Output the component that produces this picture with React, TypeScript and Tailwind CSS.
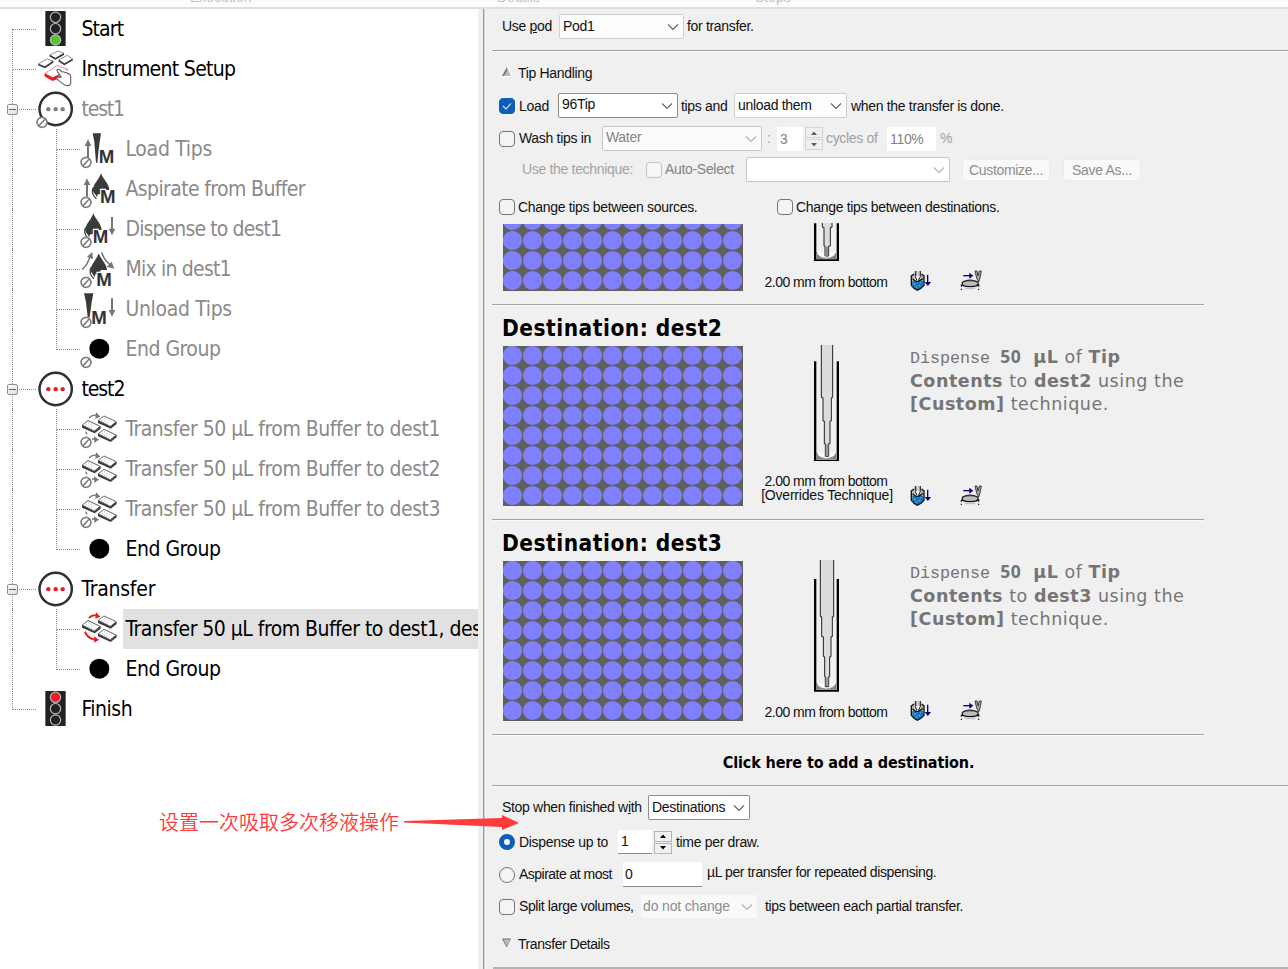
import React from "react";

const UI = "font-['Liberation_Sans',sans-serif] text-[14px]";
const TAHOMA = "font-['DejaVu_Sans_Condensed','DejaVu_Sans',sans-serif]";

/* ---------- tree icons: drawn in a 120-unit box, shown at 40px ---------- */

function Glyph({ children, off = false }: { children: React.ReactNode; off?: boolean }) {
  return (
    <svg viewBox="0 0 120 120" className="block size-10 shrink-0 overflow-visible">
      {children}
      {off && (
        <g fill="#fff" stroke="#808080" strokeWidth="5">
          <circle cx="18" cy="100" r="15" />
          <path d="M9 110 28 90" />
        </g>
      )}
    </svg>
  );
}

function TrafficLight({ on }: { on: "green" | "red" }) {
  return (
    <Glyph>
      <rect x="28" y="6" width="61" height="105" rx="2" fill="#222" />
      <g stroke="#b9b9b9" strokeWidth="3.5" fill="#222">
        <circle cx="58.500" cy="25" r="15.500" fill={on === "red" ? "#ee1c25" : "#222"} />
        <circle cx="58.500" cy="59" r="15.500" />
        <circle cx="58.500" cy="93" r="15.500" fill={on === "green" ? "#55c52d" : "#222"} />
      </g>
    </Glyph>
  );
}

function SetupIcon() {
  return (
    <Glyph>
      <g fill="#fff" stroke="#777" strokeWidth="2.5" strokeLinejoin="round">
        <path d="M7 45 32 30 52 36 27 53Z" />
        <path d="M41 18 67 6 84 13 58 28Z" />
        <path d="M68 33 94 19 110 30 85 44Z" />
      </g>
      <g fill="none" stroke="#333" strokeWidth="4.5">
        <path d="M7 47 27 55 52 38" />
        <path d="M41 20 58 30 84 15" />
        <path d="M68 35 85 46 110 32" />
      </g>
      <path d="M26 74 64 49 96 62 M88 58 95 62 92 67" fill="none" stroke="#f55" strokeWidth="3" strokeDasharray="5 2" />
      <path d="M26 76 50 89 70 80 M27 79 50 92 66 86" fill="none" stroke="#ed1c24" strokeWidth="7" />
      <path
        d="M67 61Q61 61 64 67L76 85 67 84Q60 85 64 91L80 104Q88 111 99 110L104 104V82Q102 73 95 74 92 69 87 71 83 67 79 69L72 63Q69 61 67 61Z"
        fill="#fff"
        stroke="#666"
        strokeWidth="3.500"
        strokeLinejoin="round"
      />
    </Glyph>
  );
}

function GroupIcon({ off = false }: { off?: boolean }) {
  return (
    <Glyph off={off}>
      <circle cx="59" cy="60" r="48.500" fill="#fff" stroke="#303030" strokeWidth="7.500" />
      <g fill={off ? "#808080" : "#ed1c24"}>
        <circle cx="37" cy="60.500" r="6.500" />
        <circle cx="59" cy="60.500" r="6.500" />
        <circle cx="80" cy="60.500" r="6.500" />
      </g>
    </Glyph>
  );
}

function EndIcon({ off = false }: { off?: boolean }) {
  return (
    <Glyph off={off}>
      <circle cx="58" cy="59" r="30" fill="#000" />
    </Glyph>
  );
}

function Em({ x, y = 103 }: { x: number; y?: number }) {
  return (
    <text
      x={x}
      y={y}
      className="font-['Liberation_Sans',sans-serif] text-[56px] font-bold tracking-normal"
      fill="#333"
      stroke="#fff"
      strokeWidth="7"
      paintOrder="stroke"
    >
      M
    </text>
  );
}

const UP = "M0 0 10 20H3V55H-3V20H-10Z";

function LoadIcon() {
  return (
    <Glyph off>
      <path d="M38 13H63L59 38 52 101H48L43 38Z" fill="#3a3a3a" />
      <Em x={56} />
      <path d={UP} transform="translate(24 31)" fill="#757575" />
    </Glyph>
  );
}

function DropShape({ x }: { x: number }) {
  return (
    <g transform={`translate(${x} 13)`}>
      <path d="M0 0C6 18 25 32 25 50H7L-2 63H-10L-12 72-18 62Q-28 52-22 40C-18 28-5 16 0 0Z" fill="#3a3a3a" />
      <path d="M-23 42Q-32 60-14 76" fill="none" stroke="#444" strokeWidth="4" />
    </g>
  );
}

function AspirateIcon() {
  return (
    <Glyph off>
      <DropShape x={63} />
      <Em x={60} />
      <path d={UP} transform="translate(21 28)" fill="#757575" />
    </Glyph>
  );
}

function DispenseIcon() {
  return (
    <Glyph off>
      <DropShape x={40} />
      <Em x={38} />
      <path d={UP} transform="translate(96 79) rotate(180)" fill="#757575" />
    </Glyph>
  );
}

function MixIcon() {
  return (
    <Glyph off>
      <DropShape x={56} />
      <Em x={49} y={112} />
      <g fill="none" stroke="#757575" strokeWidth="4.500">
        <path d="M6 61Q22 50 30 22M65 10Q72 34 92 48" />
      </g>
      <path d="M37 9 39 31 21 23ZM103 59 80 53 95 38Z" fill="#757575" />
    </Glyph>
  );
}

function UnloadIcon() {
  return (
    <Glyph off>
      <path d="M12 13H40L35 40 29 84H23L18 40Z" fill="#3a3a3a" />
      <Em x={34} y={104} />
      <path d={UP} transform="translate(96 83) rotate(180)" fill="#757575" />
    </Glyph>
  );
}

function Plate({ x, y }: { x: number; y: number }) {
  return (
    <g transform={`translate(${x} ${y})`}>
      <path d="M0 15 18 0 56 18 56 25 38 39 0 22Z" fill="#3c3c3c" />
      <path d="M1 14 18 1 54 18 37 32Z" fill="#fff" stroke="#666" strokeWidth="2.500" />
      <path d="M12 13 34 24M19 8 41 19" stroke="#999" strokeWidth="2.500" strokeDasharray="3 5" />
    </g>
  );
}

function TransferIcon({ off = false }: { off?: boolean }) {
  const c = off ? "#777" : "#ed1c24";
  return (
    <Glyph off={off}>
      <Plate x={6} y={34} />
      <Plate x={54} y={20} />
      <Plate x={54} y={60} />
      <path d="M27 27Q38 15 52 20" fill="none" stroke={c} strokeWidth={off ? 4 : 6} />
      <path d="M48 10 61 23 46 29Z" fill={c} />
      <path d={off ? "M17 68 21 76M36 90H46" : "M15 68Q22 88 44 92"} fill="none" stroke={c} strokeWidth={off ? 4 : 6} />
      <path d="M42 82 57 92 43 101Z" fill={c} />
    </Glyph>
  );
}

/* ------------------------------- tree ------------------------------- */

type Node = {
  label: string;
  icon: React.ReactNode;
  spacing: string;
  level?: 1;
  open?: boolean;
  dim?: boolean;
  first?: boolean;
  last?: boolean;
  selected?: boolean;
};

const nodes: Node[] = [
  { label: "Start", icon: <TrafficLight on="green" />, first: true, spacing: "tracking-[-0.900px]" },
  { label: "Instrument Setup", icon: <SetupIcon />, spacing: "tracking-[-0.690px]" },
  { label: "test1", icon: <GroupIcon off />, open: true, dim: true, spacing: "tracking-[-1.200px]" },
  { label: "Load Tips", icon: <LoadIcon />, level: 1, dim: true, spacing: "tracking-[-0.300px]" },
  { label: "Aspirate from Buffer", icon: <AspirateIcon />, level: 1, dim: true, spacing: "tracking-[-0.620px]" },
  { label: "Dispense to dest1", icon: <DispenseIcon />, level: 1, dim: true, spacing: "tracking-[-0.880px]" },
  { label: "Mix in dest1", icon: <MixIcon />, level: 1, dim: true, spacing: "tracking-[-0.800px]" },
  { label: "Unload Tips", icon: <UnloadIcon />, level: 1, dim: true, spacing: "tracking-[-0.350px]" },
  { label: "End Group", icon: <EndIcon off />, level: 1, dim: true, last: true, spacing: "tracking-[-0.500px]" },
  { label: "test2", icon: <GroupIcon />, open: true, spacing: "tracking-[-1.100px]" },
  { label: "Transfer 50 µL from Buffer to dest1", icon: <TransferIcon off />, level: 1, dim: true, spacing: "tracking-[-0.490px]" },
  { label: "Transfer 50 µL from Buffer to dest2", icon: <TransferIcon off />, level: 1, dim: true, spacing: "tracking-[-0.490px]" },
  { label: "Transfer 50 µL from Buffer to dest3", icon: <TransferIcon off />, level: 1, dim: true, spacing: "tracking-[-0.490px]" },
  { label: "End Group", icon: <EndIcon />, level: 1, last: true, spacing: "tracking-[-0.500px]" },
  { label: "Transfer", icon: <GroupIcon />, open: true, spacing: "tracking-[-0.250px]" },
  {
    label: "Transfer 50 µL from Buffer to dest1, dest2, dest3",
    icon: <TransferIcon />,
    level: 1,
    selected: true,
    spacing: "tracking-[-0.530px]",
  },
  { label: "End Group", icon: <EndIcon />, level: 1, last: true, spacing: "tracking-[-0.500px]" },
  { label: "Finish", icon: <TrafficLight on="red" />, last: true, spacing: "tracking-[-0.500px]" },
];

function Guide({ first, last }: { first?: boolean; last?: boolean }) {
  return (
    <div className="flex w-6 shrink-0 flex-col">
      <div className={`h-[21px] border-b border-dotted border-[#8c8c8c] ${first ? "" : "border-l"}`} />
      <div className={`h-[19px] border-dotted border-[#8c8c8c] ${last ? "" : "border-l"}`} />
    </div>
  );
}

function TreeRow({ n }: { n: Node }) {
  return (
    <div className="relative flex h-10 shrink-0 pl-3">
      {n.level ? (
        <>
          <div className="w-11 shrink-0 border-l border-dotted border-[#8c8c8c]" />
          <Guide last={n.last} />
        </>
      ) : (
        <Guide first={n.first} last={n.last} />
      )}
      {n.open && (
        <span className="absolute left-[7px] top-[15px] flex size-[11px] items-center justify-center rounded-[2px] border border-[#919191] bg-linear-to-br from-white to-[#dcdcdc]">
          <span className="h-px w-[7px] bg-[#4b63a7]" />
        </span>
      )}
      {n.icon}
      <div
        className={`ml-[3px] flex grow items-center overflow-hidden pl-[2.500px] whitespace-nowrap ${n.spacing} ${
          n.dim ? "text-[#8a8a8a]" : "text-black"
        } ${n.selected ? "bg-[#e1e1e1]" : ""}`}
      >
        {n.label}
      </div>
    </div>
  );
}

/* ----------------------------- controls ----------------------------- */

function Chevron({ dim }: { dim?: boolean }) {
  return (
    <svg viewBox="0 0 12 8" className="h-2 w-3 shrink-0">
      <path d="M1 1.500 6 6.500 11 1.500" fill="none" stroke={dim ? "#b4b4b4" : "#666"} strokeWidth="1.200" />
    </svg>
  );
}

function Combo({ className, value, dim, raised }: { className: string; value?: string; dim?: boolean; raised?: boolean }) {
  return (
    <div className={`flex h-[25px] shrink-0 items-center justify-between rounded-[2px] border pr-1 pl-[3px] whitespace-nowrap ${className}`}>
      <span className={raised ? "pb-[2px]" : ""}>{value}</span>
      <Chevron dim={dim} />
    </div>
  );
}

function Check({ on, dim, className = "" }: { on?: boolean; dim?: boolean; className?: string }) {
  return (
    <span
      className={`flex size-4 shrink-0 items-center justify-center rounded-[4px] border ${
        on ? "border-[#0a5fb8] bg-[#0a5fb8]" : dim ? "border-[#c2c2c2] bg-[#f6f6f6]" : "border-[#757575] bg-[#f4f4f4]"
      } ${className}`}
    >
      {on && (
        <svg viewBox="0 0 12 12" className="size-3">
          <path d="M2 6 5 9 10 3.500" fill="none" stroke="#e6f0fa" strokeWidth="1.100" />
        </svg>
      )}
    </span>
  );
}

function Radio({ on }: { on?: boolean }) {
  return (
    <span
      className={`size-4 shrink-0 rounded-full ${on ? "border-[5px] border-[#0a5fb8] bg-white" : "border border-[#757575] bg-[#f4f4f4]"}`}
    />
  );
}

function Spinner({ dim, className }: { dim?: boolean; className: string }) {
  const box = `flex h-[11px] w-[18px] items-center justify-center border ${dim ? "border-[#d4d4d4]" : "border-[#b4b4b4]"} bg-[#f0f0f0]`;
  const c = dim ? "#606060" : "#000";
  return (
    <div className={`flex shrink-0 flex-col gap-px ${className}`}>
      <span className={box}>
        <svg viewBox="0 0 6 4" className="h-1 w-1.5">
          <path d="M0 4 3 .5 6 4Z" fill={c} />
        </svg>
      </span>
      <span className={box}>
        <svg viewBox="0 0 6 4" className="h-1 w-1.5">
          <path d="M0 0 3 3.500 6 0Z" fill={c} />
        </svg>
      </span>
    </div>
  );
}

function Rule({ full }: { full?: boolean }) {
  return <div className={`ml-[6px] h-[2px] shrink-0 border-t border-[#a2a2a2] bg-[#fafafa] ${full ? "" : "w-[712px]"}`} />;
}

/* ---------------------------- labware art ---------------------------- */

function Plate96({ rows, top = 0 }: { rows: number; top?: number }) {
  const h = rows * 20 - top;
  const wells = [];
  for (let r = 0; r < rows; r++) {
    for (let c = 0; c < 12; c++) {
      wells.push(<circle key={`${r}-${c}`} cx={9.500 + c * 20} cy={9.500 + r * 20} r="9.600" />);
    }
  }
  return (
    <svg width="240" height={h} viewBox={`0 ${top} 240 ${h}`} className="block shrink-0">
      <rect y={top} width="240" height={h} fill="#606060" />
      <g fill="#8080ff">{wells}</g>
    </svg>
  );
}

function Well({ bottom }: { bottom: number }) {
  const b = bottom;
  return (
    <>
      <path d={`M197 ${b - 25}Q201 ${b - 9} 226 ${b - 7}Q251 ${b - 9} 255 ${b - 25}V${b - 6}H197Z`} fill="#808080" />
      <path
        d={`M197 ${b - 26}Q201 ${b - 10} 226 ${b - 8}Q251 ${b - 10} 255 ${b - 26}`}
        fill="#fbfbfb"
        stroke="#444"
        strokeWidth="2"
        strokeDasharray="7 2"
      />
    </>
  );
}

function TubeShort() {
  return (
    <svg viewBox="186 39 81 114" className="block h-[38px] w-[27px] shrink-0">
      <Well bottom={153} />
      <path d="M189 40H196V148H257V40H264V153H189Z" fill="#000" />
      <path d="M214 32V52H219V108H222V138H233V108H238V52H243V32Z" fill="#dcdcdc" stroke="#222" strokeWidth="3" />
      <path d="M223 110H232V137H223Z" fill="#888" />
    </svg>
  );
}

function TubeMid() {
  return (
    <svg viewBox="186 14 81 349" className="block h-[116.300px] w-[27px] shrink-0">
      <Well bottom={363} />
      <path d="M189 63H196V358H257V63H264V363H189Z" fill="#000" />
      <path d="M211 10V172H216V242H220V310H223V348H233V310H237V242H241V172H245V10Z" fill="#dcdcdc" stroke="#222" strokeWidth="3" />
      <path d="M224 312H232V346H224Z" fill="#999" />
    </svg>
  );
}

function TubeLong() {
  return (
    <svg viewBox="186 58 81 395" className="block h-[131.700px] w-[27px] shrink-0">
      <Well bottom={453} />
      <path d="M189 115H196V448H257V115H264V453H189Z" fill="#000" />
      <path d="M208 54V228H212V288H217V348H221V408H223V438H233V408H236V348H240V288H244V228H248V54Z" fill="#dcdcdc" stroke="#222" strokeWidth="3" />
      <path d="M224 410H232V436H224Z" fill="#999" />
    </svg>
  );
}

function Actions() {
  return (
    <div className="flex gap-7">
      <svg viewBox="0 0 66 66" className="block size-[22px]">
        <path d="M4 18 13 10V54L4 45ZM42 18 33 10V54L42 45Z" fill="#b5b5b5" />
        <path d="M7 33 14 31 22 38 30 31 39 33V47L31 56 22 60 13 56 7 47Z" fill="#1476c0" />
        <path d="M12 42H17M26 47H31M17 51H21M31 38H34" stroke="#7cc6f0" strokeWidth="3" />
        <path d="M4 16V46L12 55 22 61 33 55 42 46V16M4 18 12 12M42 18 35 12M8 26 19 35 24 35 38 26" fill="none" stroke="#111" strokeWidth="4" />
        <path d="M16 3V20L21 32M31 3V20L25 32" fill="none" stroke="#111" strokeWidth="3" />
        <path d="M20 3V18M27 3V18" fill="none" stroke="#777" strokeWidth="2.500" />
        <path d="M53 14V38" stroke="#00008b" strokeWidth="4" />
        <path d="M44 36H63L53.500 48Z" fill="#00008b" />
      </svg>
      <svg viewBox="0 0 66 66" className="block size-[22px]">
        <path d="M10 17H30" stroke="#00008b" strokeWidth="4" />
        <path d="M28 8 40 17 28 26Z" fill="#00008b" />
        <path d="M45 3H51L54 18 58 3H64L60 24 56 36 50 24Z" fill="#aaa" stroke="#222" strokeWidth="2.500" />
        <path d="M7 37Q30 24 54 37V46Q30 54 7 46Z" fill="#bdbdbd" stroke="#111" strokeWidth="3.500" />
        <path d="M14 33H46" fill="none" stroke="#555" strokeWidth="2.500" />
        <path d="M4 44V50M56 42V50M4 56V60M56 56V60M4 46H12M48 46H56" stroke="#111" strokeWidth="3.500" />
        <path d="M14 55H46" stroke="#c4c4c4" strokeWidth="5" />
      </svg>
    </div>
  );
}

function Detail({
  plate,
  tube,
  caption,
  children,
}: {
  plate: React.ReactNode;
  tube: React.ReactNode;
  caption: string[];
  children?: React.ReactNode;
}) {
  return (
    <div className="flex grow pl-[17px]">
      <div className="w-[240px] shrink-0">{plate}</div>
      <div
        className={`ml-[17px] flex w-[132px] shrink-0 flex-col items-center justify-between ${
          caption.length > 1 ? "pb-[17px]" : "pb-[15px]"
        }`}
      >
        {tube}
        <div className={`text-center whitespace-nowrap ${UI}`}>
          {caption.map((c, i) => (
            <div key={c} className={`leading-[14px] ${i ? "pl-[2px] tracking-[-0.200px]" : "tracking-[-0.540px]"}`}>
              {c}
            </div>
          ))}
        </div>
      </div>
      <div className="ml-[18px] flex w-[290px] shrink-0 flex-col justify-between pb-[12px]">
        <div>{children}</div>
        <Actions />
      </div>
    </div>
  );
}

function Destination({ name, tube, caption }: { name: string; tube: React.ReactNode; caption: string[] }) {
  return (
    <section className="flex h-[213px] shrink-0 flex-col">
      <h2 className={`h-[39px] shrink-0 pt-1 pl-4 text-[22.500px] leading-[36px] font-bold tracking-[0.500px] text-black ${TAHOMA}`}>
        Destination: {name}
      </h2>
      <Detail
        plate={
          <div className="pt-px">
            <Plate96 rows={8} />
          </div>
        }
        tube={tube}
        caption={caption}
      >
        <p className="font-['DejaVu_Sans',sans-serif] text-[17.500px] leading-[23px] tracking-[0.530px] whitespace-nowrap text-[#757575]">
          <span className="font-['Liberation_Mono',monospace] text-[16.700px] tracking-normal">Dispense </span>
          <b className="mr-[12px] font-['Open_Sans',sans-serif] text-[17.500px] tracking-[0.600px]">50</b>
          <b>µL</b> of <b>Tip</b>
          <br />
          <b>Contents</b> to <b>{name}</b> using the
          <br />
          <b>[Custom]</b> technique.
        </p>
      </Detail>
    </section>
  );
}

/* -------------------------------- app -------------------------------- */

export default function App() {
  return (
    <div className="relative flex h-[969px] w-[1288px] flex-col overflow-hidden bg-white">
      <header className={`flex h-[9px] shrink-0 overflow-hidden border-b-2 border-[#dedede] bg-[#fcfcfc] text-[#c4c4c4] ${UI}`}>
        <span className="-mt-[11px] ml-[190px] w-[307px] leading-4">Execution</span>
        <span className="-mt-[11px] w-[258px] leading-4">Details</span>
        <span className="-mt-[11px] leading-4">Steps</span>
      </header>

      <div className="flex min-h-0 grow">
        <nav className={`flex w-[478px] shrink-0 flex-col text-[21px] leading-none ${TAHOMA}`}>
          {nodes.map((n, i) => (
            <TreeRow key={i} n={n} />
          ))}
        </nav>
        <div className="w-[5px] shrink-0 bg-[#f0f0f0]" />
        <div className="w-[2px] shrink-0 border-l border-[#9c9c9c] bg-[#d0d0d0]" />

        <main className={`flex min-w-0 grow flex-col border-l border-[#fafafa] bg-[#f0f0f0] tracking-[-0.320px] text-[#111] ${UI}`}>
          <div className="flex h-[41px] shrink-0 items-start whitespace-nowrap">
            <span className="ml-4 w-[57px] pt-[7px]">
              Use <u className="decoration-1 underline-offset-1">p</u>od
            </span>
            <Combo className="mt-[5px] w-[125px] border-[#cfcfcf] bg-[#fdfdfd]" value="Pod1" />
            <span className="ml-[3px] pt-[7px]">for transfer.</span>
          </div>
          <Rule full />

          <div className="mt-2 flex h-[26px] shrink-0 items-center pl-4">
            <svg viewBox="0 0 10 10" className="mb-[3px] h-2.5 w-2.5">
              <path d="M0 9 5 0 6 9Z" fill="#777" />
              <path d="M6 2 9 9H2Z" fill="#bbb" />
              <path d="M0 9.500H10L7 2" fill="none" stroke="#fff" />
            </svg>
            <span className="ml-1.5">Tip Handling</span>
          </div>

          <div className="mt-[7px] flex h-[25px] shrink-0 items-center pl-[13px] whitespace-nowrap">
            <Check on />
            <span className="ml-1 w-[39px] pt-px">Load</span>
            <Combo className="w-[120px] border-[#8d8d8d] bg-white" value="96Tip" raised />
            <span className="ml-[3px] w-[53px] pt-px">tips and</span>
            <Combo className="w-[113px] border-[#cfcfcf] bg-[#fdfdfd]" value="unload them" />
            <span className="ml-[4px] pt-px">when the transfer is done.</span>
          </div>

          <div className="mt-2 flex h-[25px] shrink-0 items-center pl-[13px] whitespace-nowrap text-[#a0a0a0]">
            <Check />
            <span className="ml-1 w-[83px] text-[#111]">Wash tips in</span>
            <Combo className="w-[160px] border-[#c6c6c6] bg-[#fbfbfb] text-[#838383]" value="Water" dim raised />
            <span className="ml-[5px] w-[10px]">:</span>
            <span className="w-[26px] bg-white pl-[3px] leading-6 text-[#838383]">3</span>
            <Spinner dim className="ml-[2px]" />
            <span className="ml-[3px] w-[61px]">cycles of</span>
            <span className="w-[49px] bg-white pl-[3px] leading-6 text-[#838383]">110%</span>
            <span className="ml-[4px]">%</span>
          </div>

          <div className="mt-1.5 flex h-[25px] shrink-0 items-center pl-9 whitespace-nowrap text-[#a3a3a3]">
            <span className="w-[124px]">Use the technique:</span>
            <Check dim />
            <span className="ml-[3px] w-[81px] text-[#838383]">Auto-Select</span>
            <Combo className="w-[204px] border-[#c6c6c6] bg-white" dim />
            <span className="ml-[12px] w-[88px] rounded-[3px] border border-[#ebebeb] bg-[#f9f9f9] text-center leading-5 text-[#8d8d8d]">
              Customize...
            </span>
            <span className="ml-[13px] w-[78px] rounded-[3px] border border-[#ebebeb] bg-[#f9f9f9] text-center leading-5 text-[#8d8d8d]">
              Save As...
            </span>
          </div>

          <div className="mt-[17px] flex h-4 shrink-0 items-center pl-[13px] whitespace-nowrap">
            <Check />
            <span className="ml-[3px] w-[259px]">Change tips between sources.</span>
            <Check />
            <span className="ml-[3px]">Change tips between destinations.</span>
          </div>

          <section className="mt-2 flex h-[81px] shrink-0 flex-col">
            <Detail
              plate={
                <div className="pt-px">
                  <Plate96 rows={4} top={13} />
                </div>
              }
              tube={<TubeShort />}
              caption={["2.00 mm from bottom"]}
            />
          </section>
          <Rule />

          <Destination name="dest2" tube={<TubeMid />} caption={["2.00 mm from bottom", "[Overrides Technique]"]} />
          <Rule />
          <Destination name="dest3" tube={<TubeLong />} caption={["2.00 mm from bottom"]} />
          <Rule />

          <div className={`flex h-[49px] w-[725px] shrink-0 items-center justify-center pt-[5px] text-[16px] font-bold tracking-[-0.110px] whitespace-nowrap text-black ${TAHOMA}`}>
            Click here to add a destination.
          </div>
          <Rule full />

          <div className="mt-2 flex h-[25px] shrink-0 items-center pl-4 whitespace-nowrap">
            <span className="w-[146px]">
              Stop when finished w<u className="decoration-1 underline-offset-1">i</u>th
            </span>
            <Combo className="w-[102px] border-[#8d8d8d] bg-white" value="Destinations" />
          </div>

          <div className="mt-2.5 flex h-6 shrink-0 items-center pl-[13px] whitespace-nowrap">
            <Radio on />
            <span className="ml-1 w-[99px]">Dispense up to</span>
            <span className="w-[34px] border-b border-[#8a8a8a] bg-white pl-[3px] leading-[23px]">1</span>
            <Spinner className="ml-[2px]" />
            <span className="ml-1">time per draw.</span>
          </div>

          <div className="mt-2 flex h-[25px] shrink-0 items-center pl-[13px] whitespace-nowrap">
            <Radio />
            <span className="ml-1 w-[104px] tracking-[-0.520px]">Aspirate at most</span>
            <span className="w-[79px] border-b border-[#8a8a8a] bg-white pl-[2px] leading-6">0</span>
            <span className="ml-[5px] pb-1 tracking-[-0.390px]">µL per transfer for repeated dispensing.</span>
          </div>

          <div className="mt-2 flex h-[23px] shrink-0 items-center pl-[13px] whitespace-nowrap">
            <Check />
            <span className="ml-1 w-[122px] tracking-[-0.380px]">Split large volumes,</span>
            <div className="flex h-[23px] w-[116px] items-center justify-between bg-[#f9f9f9] pr-1 pl-[2px] tracking-[-0.150px] text-[#8d8d8d]">
              <span>do not change</span>
              <Chevron dim />
            </div>
            <span className="ml-[8px]">tips between each partial transfer.</span>
          </div>

          <div className="mt-[14px] flex h-[25px] shrink-0 items-center pl-4">
            <svg viewBox="0 0 10 10" className="mb-[3px] h-2.5 w-2.5">
              <path d="M.5 1H9L5 9Z" fill="#bbb" stroke="#777" />
              <path d="M9.500 1 5.500 9.500" stroke="#fff" />
            </svg>
            <span className="ml-1.5 tracking-[-0.420px]">Transfer Details</span>
          </div>
          <div className="mt-2.5 ml-[7px] h-[2px] shrink-0 bg-[#b4b4b4]" />
        </main>
      </div>

      <div className="absolute top-[808px] left-[159px] flex items-center text-[#fb3b3b]">
        <span className="w-[245px] font-['Noto_Sans_CJK_SC',sans-serif] text-[20px] leading-[28px] font-[350] whitespace-nowrap">
          设置一次吸取多次移液操作
        </span>
        <svg viewBox="0 0 115 18" className="mt-[2px] h-[18px] w-[115px]">
          <path d="M0 7 98 4V1L115 9 98 16V13L0 8.500Z" fill="#ff3b3b" />
        </svg>
      </div>
    </div>
  );
}
